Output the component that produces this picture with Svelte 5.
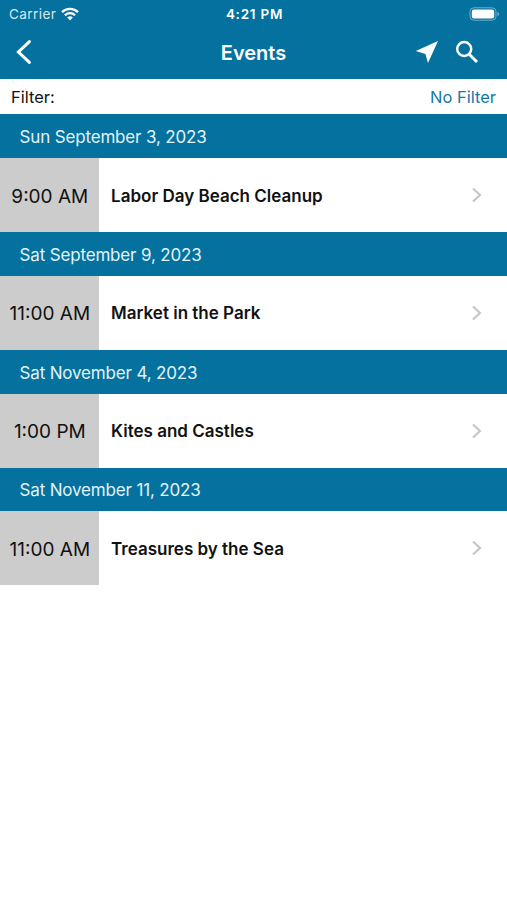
<script>
  let filter = 'No Filter';

  const days = [
    { date: 'Sun September 3, 2023', time: '9:00 AM', title: 'Labor Day Beach Cleanup' },
    { date: 'Sat September 9, 2023', time: '11:00 AM', title: 'Market in the Park' },
    { date: 'Sat November 4, 2023', time: '1:00 PM', title: 'Kites and Castles' },
    { date: 'Sat November 11, 2023', time: '11:00 AM', title: 'Treasures by the Sea' }
  ];
</script>

<div class="screen">
  <header>
    <div class="status">
      <div class="carrier">
        <span>Carrier</span>
        <svg width="18" height="14" viewBox="0 0 18 14" fill="none" stroke="#fff" stroke-width="2.3">
          <path d="M1 5.1a11.4 11.4 0 0 1 16 0" />
          <path d="M3.9 8.3a7.3 7.3 0 0 1 10.2 0" />
          <path d="M9 13.4 6.2 10.6a4 4 0 0 1 5.6 0Z" fill="#fff" stroke="none" />
        </svg>
      </div>
      <span class="clock">4:21 PM</span>
      <svg class="battery" width="31" height="14" viewBox="0 0 31 14">
        <rect x="1" y=".8" width="26" height="12.4" rx="3.8" fill="none" stroke="#6fb0cf" />
        <rect x="2.8" y="2.6" width="22.4" height="8.8" rx="2.2" fill="#fff" />
        <path d="M28.4 4.8q1.7.7 1.7 2.2t-1.7 2.2Z" fill="#6fb0cf" />
      </svg>
    </div>

    <nav>
      <button class="back" aria-label="Back">
        <svg width="18" height="26" viewBox="0 0 18 26" fill="none" stroke="#fff" stroke-width="3" stroke-linecap="round">
          <path d="M15.4 2.6 4.4 13l11 10.4" />
        </svg>
      </button>
      <h1>Events</h1>
      <div class="actions">
        <button aria-label="Near me">
          <svg width="24" height="24" viewBox="0 0 24 24" fill="#fff">
            <path d="M23 1 .8 11l9.6 3L13 23Z" />
          </svg>
        </button>
        <button aria-label="Search">
          <svg width="24" height="24" viewBox="0 0 24 24" fill="none" stroke="#fff">
            <circle cx="9.2" cy="9" r="7" stroke-width="2.5" />
            <path d="M14.2 14.3 22 22" stroke-width="3" />
          </svg>
        </button>
      </div>
    </nav>
  </header>

  <div class="filter">
    <span class="label">Filter:</span>
    <button class="value">{filter}</button>
  </div>

  {#each days as day}
    <section>
      <h2>{day.date}</h2>
      <div class="event">
        <div class="time"><span>{day.time}</span></div>
        <div class="title"><span>{day.title}</span></div>
        <svg width="12" height="16" viewBox="0 0 12 16" fill="none" stroke="#c6c6c8" stroke-width="2.2">
          <path d="M2 1.5 9 8l-7 6.5" />
        </svg>
      </div>
    </section>
  {/each}
</div>

<style>
  :global(body) {
    background: #fff;
  }
  .screen {
    height: 900px;
    overflow: hidden;
    font-family: Inter, 'Liberation Sans', sans-serif;
    color: #111;
    background: #fff;
  }
  button {
    display: flex;
    padding: 0;
    border: 0;
    background: none;
    font: inherit;
    color: inherit;
  }
  svg {
    display: block;
    flex: none;
  }
  header {
    height: 79.3px;
    background: #04719e;
    color: #fff;
  }
  .status {
    display: grid;
    grid-template-columns: 1fr auto 1fr;
    align-items: center;
    height: 27px;
    padding: 0 7px 0 9px;
    font-size: 13.5px;
  }
  .carrier {
    display: flex;
    align-items: center;
    gap: 5px;
    color: #d5e9f2;
    letter-spacing: 0.45px;
  }
  .clock {
    font-weight: 600;
    letter-spacing: 0.75px;
  }
  .battery {
    justify-self: end;
  }
  nav {
    display: grid;
    grid-template-columns: 1fr auto 1fr;
    align-items: center;
    height: 50px;
    padding: 0 14px;
  }
  h1 {
    margin: 0;
    padding-top: 1px;
    font-size: 20px;
    font-weight: 600;
  }
  .actions {
    display: flex;
    justify-content: flex-end;
    gap: 16px;
    padding-right: 14px;
  }
  .filter {
    display: flex;
    align-items: center;
    justify-content: space-between;
    height: 35.2px;
    padding: 0 11px;
    font-size: 16.5px;
  }
  .value {
    color: #1878a5;
  }
  h2 {
    display: flex;
    align-items: center;
    box-sizing: border-box;
    height: 43.9px;
    margin: 0;
    padding: 1.5px 0 0 19.5px;
    background: #04719e;
    color: #e2f3f8;
    font-size: 17px;
    font-weight: 400;
    letter-spacing: -0.16px;
  }
  .event {
    display: flex;
    align-items: center;
    height: 73.8px;
    padding-right: 24px;
  }
  .time {
    display: flex;
    align-items: center;
    justify-content: center;
    box-sizing: border-box;
    width: 98.6px;
    height: 100%;
    padding: 1.5px 0 0 1px;
    background: #ccc;
    font-size: 19px;
  }
  .title {
    flex: 1;
    padding: 1px 0 0 12.5px;
    font-size: 17px;
    font-weight: 600;
  }
</style>
